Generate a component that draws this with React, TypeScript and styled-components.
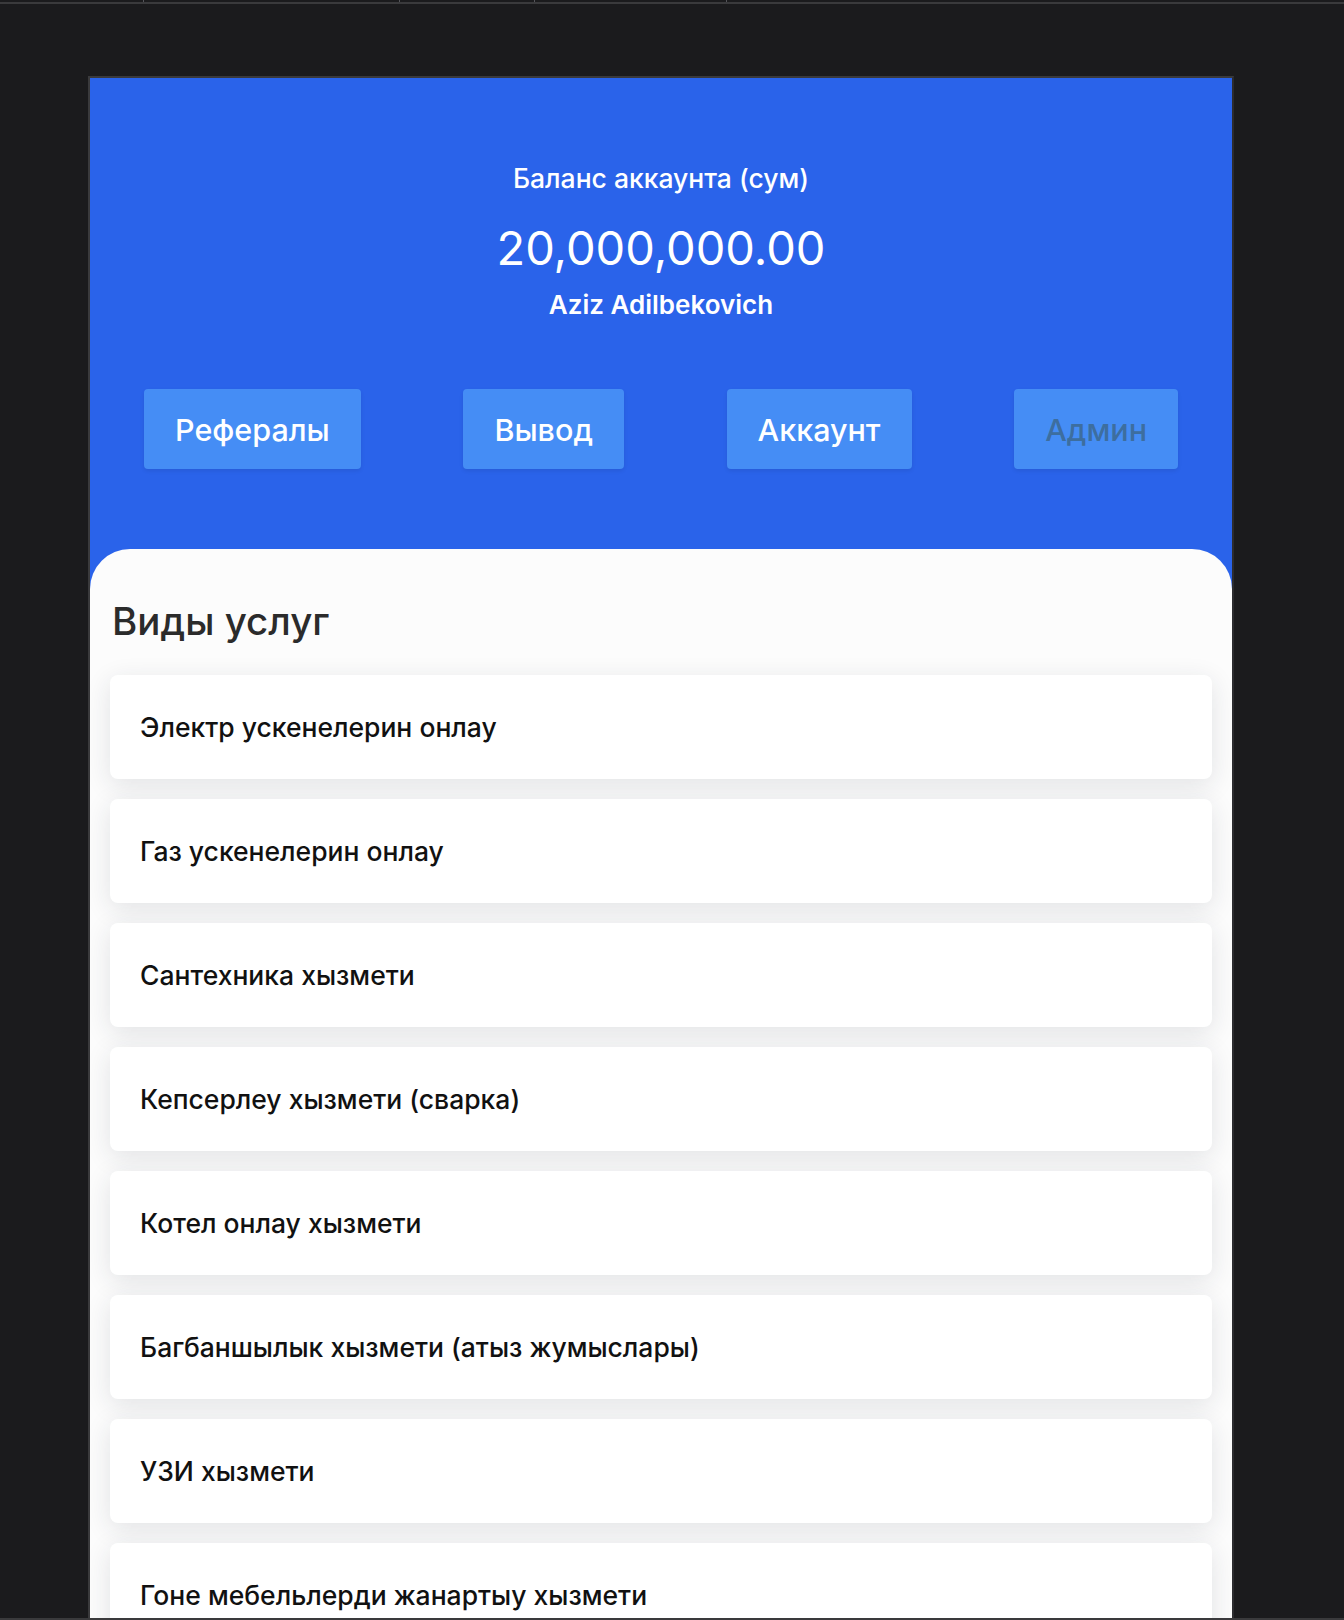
import React from 'react';
import styled, { createGlobalStyle } from 'styled-components';

// базовые цвета
const theme = {
  page: '#1b1b1d',
  frame: '#3a3a3c',
  blue: '#2a63ea',
  button: '#458df5',
  sheet: '#fcfcfc',
  text: '#111111',
};

const GlobalStyle = createGlobalStyle`
  html, body {
    margin: 0;
    padding: 0;
    background: ${theme.page};
  }
  body {
    font-family: Inter, "Noto Sans", "Liberation Sans", sans-serif;
  }
`;

const Page = styled.div`
  height: 1620px;
  display: flex;
  flex-direction: column;
  overflow: hidden;
  background: ${theme.page};
`;

// полоска вкладок сверху
const TabStrip = styled.div`
  height: 4px;
  flex-shrink: 0;
  display: flex;
  box-sizing: border-box;
  border-bottom: 2px solid ${theme.frame};
`;

const TabCell = styled.div<{ $w: number }>`
  width: ${(p) => p.$w}px;
  border-right: 1px solid #55555a;
`;

const Stage = styled.div`
  flex: 1;
  min-height: 0;
  padding: 72px 0 0 88px;
`;

const Frame = styled.div`
  width: 1146px;
  height: 100%;
  box-sizing: border-box;
  border: 2px solid ${theme.frame};
  border-bottom: none;
  border-right-color: #2c2c2f;
  background: ${theme.blue};
  display: flex;
  flex-direction: column;
  overflow: hidden;
`;

const BottomStrip = styled.div`
  height: 2px;
  flex-shrink: 0;
  background: ${theme.frame};
`;

// шапка с балансом
const Header = styled.div`
  height: 471px;
  flex-shrink: 0;
  box-sizing: border-box;
  padding-top: 84px;
  display: flex;
  flex-direction: column;
  align-items: center;
  color: #fff;
`;

const BalanceLabel = styled.div`
  font-size: 26.5px;
  font-weight: 500;
  line-height: 32px;
`;

const BalanceValue = styled.div`
  margin-top: 26px;
  font-size: 47px;
  font-weight: 400;
  line-height: 56px;
`;

const OwnerName = styled.div`
  margin-top: 13px;
  font-size: 26px;
  font-weight: 600;
  line-height: 32px;
`;

const ButtonRow = styled.div`
  align-self: stretch;
  display: flex;
  justify-content: space-between;
  padding: 0 54px;
  margin-top: 68px;
`;

const NavButton = styled.button<{ $muted?: boolean }>`
  height: 80px;
  padding: 0 31px;
  border: none;
  border-radius: 4px;
  background: ${theme.button};
  box-shadow: 0 2px 4px rgba(0, 0, 0, 0.08);
  color: ${(p) => (p.$muted ? '#3d6e9f' : '#fff')};
  font-family: inherit;
  font-size: 30.5px;
  font-weight: 500;
  cursor: ${(p) => (p.$muted ? 'default' : 'pointer')};
`;

// список услуг
const Sheet = styled.div`
  flex: 1;
  background: ${theme.sheet};
  border-radius: 40px 40px 0 0;
  padding: 0 20px;
`;

const SheetTitle = styled.h2`
  margin: 0;
  padding: 40px 0 22px 2px;
  font-size: 38.5px;
  font-weight: 500;
  line-height: 64px;
  color: #2b2b2b;
`;

const ServiceList = styled.div`
  display: flex;
  flex-direction: column;
  gap: 20px;
`;

const ServiceCard = styled.div`
  height: 104px;
  flex-shrink: 0;
  display: flex;
  align-items: center;
  padding: 0 30px;
  background: #fff;
  border-radius: 8px;
  box-shadow: 0 6px 26px rgba(30, 40, 60, 0.12);
  font-size: 26.5px;
  font-weight: 500;
  color: ${theme.text};
`;

const tabs = [143, 255, 134, 191];

const buttons = [
  { label: 'Рефералы' },
  { label: 'Вывод' },
  { label: 'Аккаунт' },
  { label: 'Админ', muted: true },
];

const services = [
  'Электр ускенелерин онлау',
  'Газ ускенелерин онлау',
  'Сантехника хызмети',
  'Кепсерлеу хызмети (сварка)',
  'Котел онлау хызмети',
  'Багбаншылык хызмети (атыз жумыслары)',
  'УЗИ хызмети',
  'Гоне мебельлерди жанартыу хызмети',
];

export default function App() {
  return (
    <Page>
      <GlobalStyle />
      <TabStrip>
        {tabs.map((w, i) => (
          <TabCell key={i} $w={w} />
        ))}
      </TabStrip>
      <Stage>
        <Frame>
          <Header>
            <BalanceLabel>Баланс аккаунта (сум)</BalanceLabel>
            <BalanceValue>20,000,000.00</BalanceValue>
            <OwnerName>Aziz Adilbekovich</OwnerName>
            <ButtonRow>
              {buttons.map((b) => (
                <NavButton key={b.label} $muted={b.muted}>
                  {b.label}
                </NavButton>
              ))}
            </ButtonRow>
          </Header>
          <Sheet>
            <SheetTitle>Виды услуг</SheetTitle>
            <ServiceList>
              {services.map((s) => (
                <ServiceCard key={s}>{s}</ServiceCard>
              ))}
            </ServiceList>
          </Sheet>
        </Frame>
      </Stage>
      <BottomStrip />
    </Page>
  );
}
